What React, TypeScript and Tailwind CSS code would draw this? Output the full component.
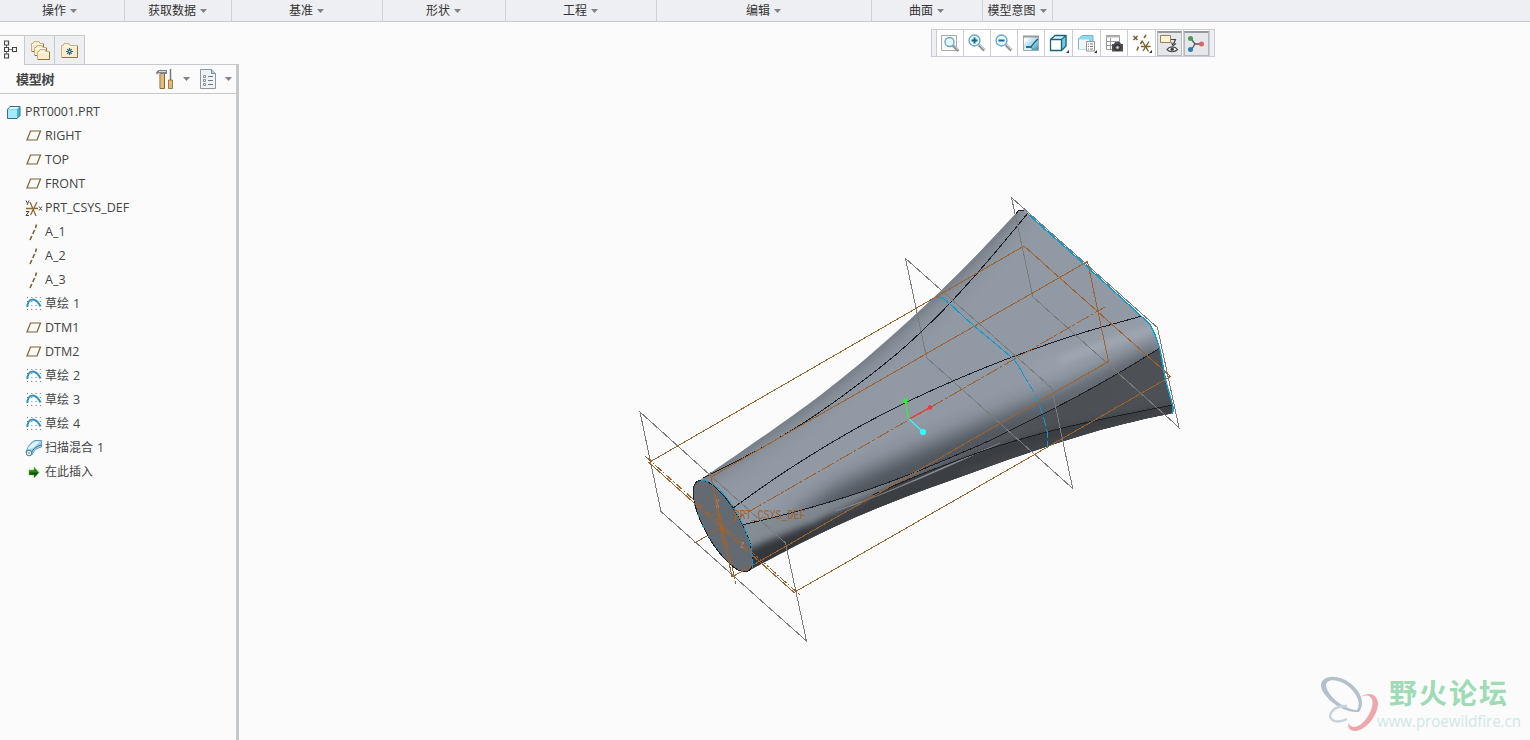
import type { ReactNode } from 'react'

type Point = [number, number]

interface MenuGroup {
  label: string
  width: string
}

type NodeKind = 'plane' | 'csys' | 'axis' | 'sketch' | 'blend' | 'insert'

interface TreeNode {
  kind: NodeKind
  label: string
  suffix?: string
  cjk?: boolean
}

const menuGroups: MenuGroup[] = [
  { label: '操作', width: 'w-[125px] pr-[5px]' },
  { label: '获取数据', width: 'w-[107px] pr-px' },
  { label: '基准', width: 'w-[151px] pr-px' },
  { label: '形状', width: 'w-[123px] pr-px' },
  { label: '工程', width: 'w-[151px] pr-px' },
  { label: '编辑', width: 'w-[215px] pr-px' },
  { label: '曲面', width: 'w-[111px] pr-px' },
  { label: '模型意图', width: 'w-[70px] pr-px' },
]

const treeNodes: TreeNode[] = [
  { kind: 'plane', label: 'RIGHT' },
  { kind: 'plane', label: 'TOP' },
  { kind: 'plane', label: 'FRONT' },
  { kind: 'csys', label: 'PRT_CSYS_DEF' },
  { kind: 'axis', label: 'A_1' },
  { kind: 'axis', label: 'A_2' },
  { kind: 'axis', label: 'A_3' },
  { kind: 'sketch', label: '草绘', suffix: '1', cjk: true },
  { kind: 'plane', label: 'DTM1' },
  { kind: 'plane', label: 'DTM2' },
  { kind: 'sketch', label: '草绘', suffix: '2', cjk: true },
  { kind: 'sketch', label: '草绘', suffix: '3', cjk: true },
  { kind: 'sketch', label: '草绘', suffix: '4', cjk: true },
  { kind: 'blend', label: '扫描混合', suffix: '1', cjk: true },
  { kind: 'insert', label: '在此插入', cjk: true },
]

function Caret() {
  return (
    <svg className="w-[7px] h-1 shrink-0" viewBox="0 0 7 4" aria-hidden="true">
      <path d="M0 0h7L3.5 4z" fill="#808285" />
    </svg>
  )
}

function MenuBar() {
  return (
    <div className="flex h-[22px] shrink-0 border-b border-[#c6cacd] bg-[#eeeff2] text-xs text-[#333]">
      {menuGroups.map((group) => (
        <div
          key={group.label}
          className={`flex items-center justify-center gap-1 border-r border-[#cfd2d6] ${group.width}`}
        >
          <span className="leading-none">{group.label}</span>
          <Caret />
        </div>
      ))}
    </div>
  )
}

function NodeIcon({ kind }: { kind: NodeKind }) {
  return (
    <svg className="w-[18px] h-[18px] shrink-0" viewBox="0 0 18 18" fill="none" aria-hidden="true">
      {kind === 'plane' && <path d="M5.5 4h10L12 13H2z" stroke="#7d612f" strokeWidth="1.2" />}
      {kind === 'csys' && (
        <>
          <path d="M1 9.500h12M5 3l6 14M12 3L5.500 16" stroke="#8a6a35" strokeWidth="1.3" />
          <path d="M1 1.500l1.500 3M4 1.500L2 6M1 12.500h3L1 16.500h3M14 7.500l3 4M17 7.500l-3 4" stroke="#444" />
        </>
      )}
      {kind === 'axis' && (
        <path d="M11.500 1.500L10.500 5M9.500 7L7.800 11M6.800 13L5 17" stroke="#7d612f" strokeWidth="1.6" />
      )}
      {kind === 'sketch' && (
        <>
          <path
            d="M2 2.500h14M2 6.500h14M2 10.500h14M2 14.500h14"
            stroke="#777"
            strokeDasharray="1 3.300"
          />
          <path d="M2.300 12C3 2.500 10.500 2 15.500 11.500" stroke="#2e94c4" strokeWidth="2" />
        </>
      )}
      {kind === 'blend' && (
        <>
          <path d="M1 13C3 7 6 3 10 1.500h6.500V8C12 9 9 11 7 16z" fill="#9fd0ea" stroke="#4e87a4" strokeWidth="0.8" />
          <path d="M2.500 10.500C4 7 7 4 11 2.500h4L8 9z" fill="#e0f4fb" />
          <path d="M6 14c2-4 5-6.500 10-8" stroke="#356f92" strokeWidth="1" />
          <circle cx="4" cy="14" r="2.800" fill="#e7f4fa" stroke="#3d7897" />
          <circle cx="4" cy="14" r="0.700" fill="#444" />
        </>
      )}
      {kind === 'insert' && (
        <>
          <path d="M4 7h5V4l5 5.500-5 5.500v-3H4z" fill="#1d8d12" stroke="#7bb62e" strokeWidth="0.5" />
          <path d="M4.500 9.500h9L9.500 14v-2.500h-5z" fill="#154c12" />
        </>
      )}
    </svg>
  )
}

function FolderShape({ x, y, w, h }: { x: number; y: number; w: number; h: number }) {
  return (
    <g transform={`translate(${x} ${y})`}>
      <path
        d={`M.5 ${h - 0.5}V2.500H2L3 .5h5l1 2h${w - 9.5}v${h - 3}z`}
        fill="#fdeccb"
        stroke="#c4ae82"
      />
      <path d={`M1 3.500h${w - 2}`} stroke="#fffaf0" />
      <path d={`M1 ${h - 0.5}h${w - 1.5}V3`} fill="none" stroke="#957435" />
    </g>
  )
}

function PanelTabs() {
  return (
    <div className="flex h-[29px]">
      <div className="flex w-6 items-center border-t border-[#c5c9ce] pl-1">
        <svg className="w-[13px] h-5" viewBox="0 0 13 20" fill="#fff" stroke="#444" aria-hidden="true">
          <path d="M2.500 5v10M5 9.500h3" stroke="#777" />
          <path d="M.5 1h4v4h-4zM.5 7.500h4v4h-4zM.5 14h4v4h-4zM8.500 7.500h4v4h-4z" strokeWidth="1.200" />
        </svg>
      </div>
      <div className="flex w-[31px] items-center justify-center border border-b-0 border-[#c5c9ce] bg-[#eeeff2] pt-0.5 pl-[3px]">
        <svg className="w-5 h-5" viewBox="0 0 20 20" aria-hidden="true">
          <FolderShape x={0} y={0} w={13} h={11} />
          <FolderShape x={3} y={4} w={13} h={11} />
          <FolderShape x={6} y={8} w={13} h={11} />
        </svg>
      </div>
      <div className="flex w-[30px] items-center justify-center border-t border-r border-[#c5c9ce] bg-[#eeeff2] pt-0.5">
        <svg className="w-[18px] h-4" viewBox="0 0 18 16" aria-hidden="true">
          <FolderShape x={0} y={0} w={17} h={15} />
          <path d="M8.500 5v7M5 8.500h7M6.200 6.200l4.600 4.600M10.800 6.200l-4.600 4.600" stroke="#1c6685" strokeWidth="1.200" />
          <circle cx="8.500" cy="8.500" r="0.800" fill="#fff" />
        </svg>
      </div>
    </div>
  )
}

function PanelHeader() {
  return (
    <div className="flex h-[29px] items-center border-b border-[#c5c9ce] pl-4 pr-1">
      <span className="pt-px text-[13px] font-bold leading-none text-[#444] tracking-[-0.02em]">模型树</span>
      <svg className="ml-auto w-[18px] h-5" viewBox="0 0 18 20" aria-hidden="true">
        <path d="M4.500 5h4v14.500h-4z" fill="#e2bb7b" />
        <path d="M4 5v14.500M8.500 5v14.500H4" fill="none" stroke="#8d6526" />
        <path d="M0 3.500C2 .5 4 .5 6 1h5v4H4.500C3 3.500 2 4 1 6z" fill="#7d838c" />
        <path d="M3 2.500h7" stroke="#d4d8df" />
        <path d="M14.500 0v11" stroke="#717983" strokeWidth="1.500" />
        <path d="M12.500 11h4v8.500h-4z" fill="#e2bb7b" stroke="#8d6526" strokeWidth="0.800" />
      </svg>
      <div className="ml-[9px]">
        <Caret />
      </div>
      <svg className="ml-2.5 w-[17px] h-5" viewBox="0 0 17 20" fill="none" aria-hidden="true">
        <path d="M.5.5h11l4 4v15H.5z" fill="#eef3f6" stroke="#8d989f" />
        <path d="M11.500.5v4h4" fill="#b9cbd8" stroke="#6e8ba0" />
        <path d="M8 7.500h5M8 11.500h5M8 15.500h5" stroke="#777" />
        <path d="M3.500 6.500h2v2h-2zM3.500 10.500h2v2h-2zM3.500 14.500h2v2h-2z" stroke="#777" strokeWidth="0.800" />
      </svg>
      <div className="ml-2">
        <Caret />
      </div>
    </div>
  )
}

function ModelTree() {
  return (
    <ul className="flex flex-col pt-[5px] text-[#444]">
      <li className="flex h-6 items-center gap-1 pt-0.5 pl-[7px]">
        <svg className="w-3.5 h-[13px] shrink-0" viewBox="0 0 14 13" aria-hidden="true">
          <path d="M.5 3.500L3 .5h10v9l-3 3H.5z" fill="#2b86ad" stroke="#2c7190" />
          <path d="M1 3.500L3 1h9.500L10 3.500z" fill="#d9f7fd" />
          <path d="M1 3.500h9v8.500H1z" fill="#a5eafa" />
          <path d="M10 3.500L12.500 1v8L10 12z" fill="#45b4dd" />
        </svg>
        <span className="font-['Open_Sans'] text-[12.5px] tracking-[-0.01em]">PRT0001.PRT</span>
      </li>
      {treeNodes.map((node) => (
        <li
          key={node.label + (node.suffix ?? '')}
          className="flex h-6 items-center gap-0.5 pt-0.5 pl-[25px]"
        >
          <NodeIcon kind={node.kind} />
          {node.cjk ? (
            <span className="text-xs">
              {node.label}
              {node.suffix && (
                <span className="ml-1 font-['Open_Sans'] text-[12.5px]">{node.suffix}</span>
              )}
            </span>
          ) : (
            <span className="font-['Open_Sans'] text-[12.5px]">{node.label}</span>
          )}
        </li>
      ))}
    </ul>
  )
}

function ToolCell({ width, pressed, more, children }: {
  width: string
  pressed?: boolean
  more?: boolean
  children: ReactNode
}) {
  return (
    <div className={`relative flex items-center justify-center border-l border-[#c9ccd4] bg-white ${width}`}>
      <div
        className={
          pressed
            ? 'flex h-[25px] w-[25px] shrink-0 items-center justify-center border border-t-2 border-[#b5b8bd] border-t-[#96999d] bg-[#e6e7eb] pr-px'
            : 'flex'
        }
      >
        <svg className="w-5 h-5 shrink-0" viewBox="0 0 20 20" fill="none" aria-hidden="true">
          {children}
        </svg>
      </div>
      {more && (
        <svg className="absolute right-[3px] bottom-[3px] w-[3px] h-[3px]" viewBox="0 0 3 3" aria-hidden="true">
          <path d="M3 0v3H0z" fill="#333" />
        </svg>
      )}
    </div>
  )
}

function Lens({ cx, cy, r }: { cx: number; cy: number; r: number }) {
  return (
    <>
      <path d={`M${cx + r - 1} ${cy + r - 1}l5.500 5.500`} stroke="#8f9498" strokeWidth="3" />
      <path d={`M${cx + r} ${cy + r - 1}l5 5`} stroke="#d8dbde" strokeWidth="1" />
      <circle cx={cx} cy={cy} r={r} fill="#e6f6fb" stroke="#62a5c4" strokeWidth="1.300" />
    </>
  )
}

function GraphicsToolbar() {
  return (
    <div className="absolute left-[692px] top-[7px] flex h-7 w-[284px] border border-[#c9ccd4] bg-[#eeeff2] pl-1">
      <ToolCell width="w-[27px]">
        <path d="M1.500 2.500h15v15h-15z" fill="#fafafa" stroke="#aaa" />
        <Lens cx={9.5} cy={9} r={4.500} />
      </ToolCell>
      <ToolCell width="w-[27px]">
        <Lens cx={7.5} cy={7.500} r={5.500} />
        <path d="M4.500 7.500h6M7.500 4.500v6" stroke="#14688f" strokeWidth="2" />
      </ToolCell>
      <ToolCell width="w-[27px]">
        <Lens cx={7.5} cy={7.500} r={5.500} />
        <path d="M4.500 7.500h6" stroke="#14688f" strokeWidth="2" />
      </ToolCell>
      <ToolCell width="w-[27px]">
        <defs>
          <linearGradient id="shade" x1="0" y1="0" x2="1" y2="1">
            <stop offset="0.2" stopColor="#f4fbfd" />
            <stop offset="0.65" stopColor="#8fcbe0" />
            <stop offset="1" stopColor="#2f86a8" />
          </linearGradient>
        </defs>
        <path d="M2.500 3.500h15v14h-15z" fill="url(#shade)" stroke="#a3a9ad" />
        <path d="M2 3.500h16" stroke="#999" strokeWidth="2" />
        <path d="M3 14.500h6L11 17H3z" fill="#d9eef5" />
        <path d="M5 14h5l2.500 3" stroke="#3b8fae" />
        <path d="M5 14h5C12 11 14 8.500 17 6" stroke="#155e7d" strokeWidth="1.300" />
      </ToolCell>
      <ToolCell width="w-[28px]" more>
        <path d="M3 7h10v10.500H3z" fill="#fff" />
        <path d="M4 6L7.500 3H16.500l-3.500 3.500z" fill="#dcf5fc" />
        <path d="M13 7l4.500-4v10L13 17z" fill="#72c7e1" />
        <path d="M1.500 6.500L6 2.500h11v10.500l-4.500 4.500h-11zM1.500 6.500h11v11M12.500 6.500l4.500-4" stroke="#14667f" strokeWidth="1.300" />
      </ToolCell>
      <ToolCell width="w-[28px]" more>
        <path d="M1.500 6L5 2.500h11V13L13 16H1.500z" fill="#8fd8ee" stroke="#6bbad6" />
        <path d="M2 6.500h10V16H2z" fill="#f2f6f8" />
        <path d="M9.500 8.500h8v9.500h-8z" fill="#fff" stroke="#909498" />
        <path d="M13 11h3M13 13.500h3M13 16h3M11 11h1M11 13.500h1M11 16h1" stroke="#777" />
      </ToolCell>
      <ToolCell width="w-[27px]">
        <path d="M2.500 2.500h13v14h-13z" fill="#fff" stroke="#999" />
        <path d="M2 3.500h14" stroke="#aeb1b5" strokeWidth="2" />
        <path d="M6.500 5v11M3 8.500h12M3 12.500h12" stroke="#999" />
        <path d="M8 11h2l1-2h5l1 2h2v7.500H8z" fill="#4a4d52" />
        <circle cx="13.500" cy="14.500" r="2.700" fill="#777d84" stroke="#17191c" />
        <circle cx="13.500" cy="14.500" r="1" fill="#dfe2e6" />
      </ToolCell>
      <ToolCell width="w-[28px]" more>
        <path d="M1.500 3l4 4M5.500 3l-4 4M14 2l-2 3M10.500 7.500L8.500 11M6.500 13.500l-1.500 4" stroke="#7d612f" strokeWidth="1.600" />
        <path d="M9 13.500h9.500M10.500 8.500l6 10M17 8.500L11 18" stroke="#7d612f" strokeWidth="1.400" />
      </ToolCell>
      <ToolCell width="w-[28px]" pressed>
        <path d="M1.500 1.500h10v7h-10z" fill="#fff2d4" stroke="#9a815a" />
        <path d="M12 5.500h4.500L14.500 10M12.500 8.500l1.500 3 3-2" stroke="#444" strokeWidth="1.200" />
        <path d="M8 15.500c2.500-3.500 8-3.500 10.500 0-2.500 3-8 3-10.500 0z" fill="#fff" stroke="#444" strokeWidth="1.200" />
        <circle cx="13.200" cy="15.300" r="1.800" fill="#444" />
      </ToolCell>
      <ToolCell width="w-[26px]" pressed>
        <path d="M5 4.500l4 5.500L5.500 15.500M9 10h6" stroke="#555" strokeWidth="1.300" />
        <circle cx="4.500" cy="4.500" r="2.500" fill="#4a9b56" />
        <circle cx="4.500" cy="15.500" r="2.500" fill="#2c7da8" />
        <circle cx="15.500" cy="10" r="2.500" fill="#e0645f" />
      </ToolCell>
      <div className="w-[5px] border-l border-[#c9ccd4]" />
    </div>
  )
}

// Catmull-Rom through the points, written as cubic segments
function smooth(points: Point[], join = 'M'): string {
  let d = `${join}${points[0][0]} ${points[0][1]}`
  for (let i = 0; i < points.length - 1; i++) {
    const p0 = points[Math.max(i - 1, 0)]
    const p1 = points[i]
    const p2 = points[i + 1]
    const p3 = points[Math.min(i + 2, points.length - 1)]
    d += `C${p1[0] + (p2[0] - p0[0]) / 6} ${p1[1] + (p2[1] - p0[1]) / 6} `
    d += `${p2[0] - (p3[0] - p1[0]) / 6} ${p2[1] - (p3[1] - p1[1]) / 6} ${p2[0]} ${p2[1]}`
  }
  return d
}

const topOutline: Point[] = [
  [700, 480], [740, 452.5], [780, 424.5], [820, 395.5], [860, 363.5], [900, 328.5], [940, 291.5], [980, 251.5], [1018, 211],
]
const endOutline: Point[] = [
  [1018, 211], [1023, 210], [1029, 214], [1085, 264], [1142, 316], [1152, 327], [1160, 348], [1166, 379], [1173, 405], [1173, 413],
]
const bottomOutline: Point[] = [
  [1173, 413], [1140, 420], [1095, 431.5], [1047, 446.5], [1000, 462.5], [953, 479.5], [905, 497], [857, 516.5], [807, 540], [748, 571],
]
const edgeUpper: Point[] = [
  [703, 478], [735, 462], [767, 445], [808, 420], [850, 390.5], [893, 357], [922, 331], [952, 301], [990, 258.5], [1028, 213],
]
const edgeMiddle: Point[] = [
  [733, 508], [777, 477], [821, 449], [865, 423.5], [910, 400.5], [960, 378], [1015, 356], [1077, 334.5], [1142, 316],
]
const edgeLower: Point[] = [
  [742, 525], [785, 514.5], [828, 502.5], [870, 489], [912, 473.5], [953, 456.5], [993, 439], [1035, 418], [1075, 397.5], [1117, 374], [1160, 348],
]
const edgeBottom: Point[] = [
  [873, 495], [912, 478], [953, 462], [995, 447], [1047, 432], [1105, 418.5], [1173, 405],
]
const midSection: Point[] = [
  [934, 297], [942, 298], [950, 304], [973, 325], [1012, 358], [1023, 374], [1033, 391], [1040, 407], [1047, 431], [1047, 447],
]

const bodyPath = smooth(topOutline) + smooth(endOutline, 'L') + smooth(bottomOutline, 'L') + 'L715 530Z'
const underPath = smooth(edgeLower) + 'L1175 348V590H742Z'

function Viewport() {
  return (
    <svg className="block h-[718px] w-[1291px]" viewBox="239 22 1291 718" fill="none">
      <defs>
        <clipPath id="body">
          <path d={bodyPath} />
        </clipPath>
        <clipPath id="under">
          <path d={underPath} />
        </clipPath>
        <filter id="soft" x="-20%" y="-20%" width="140%" height="140%" colorInterpolationFilters="sRGB">
          <feGaussianBlur stdDeviation="10" />
        </filter>
        <filter id="fine" x="-20%" y="-20%" width="140%" height="140%" colorInterpolationFilters="sRGB">
          <feGaussianBlur stdDeviation="3.500" />
        </filter>
        <linearGradient id="underFill" gradientUnits="userSpaceOnUse" x1="742" y1="0" x2="1170" y2="0">
          <stop offset="0" stopColor="#858d95" />
          <stop offset="0.3" stopColor="#7a8189" />
          <stop offset="0.45" stopColor="#666c73" />
          <stop offset="0.6" stopColor="#54585d" />
          <stop offset="0.75" stopColor="#4c5054" />
          <stop offset="1" stopColor="#4d5155" />
        </linearGradient>
      </defs>

      {/* solid body */}
      <g clipPath="url(#body)">
        <path d={bodyPath} fill="#9199a4" />
        <path d={smooth(topOutline)} stroke="#646b73" strokeWidth="12" opacity="0.65" filter="url(#soft)" />
        <path d={smooth(topOutline)} stroke="#69717a" strokeWidth="5" opacity="0.75" filter="url(#fine)" />
        <path
          d="M790 520L835 488 880 467 940 441 1000 416 1070 388 1165 343V365L1080 403 1000 450 870 506 790 528Z"
          fill="#434950"
          opacity="0.9"
          filter="url(#soft)"
        />
        <path d="M1030 372L1150 327" stroke="#a7afb9" strokeWidth="9" opacity="0.8" filter="url(#soft)" />
        <path d="M1060 360L1156 328" stroke="#a7afb9" strokeWidth="6" opacity="0.8" filter="url(#fine)" />
        <g clipPath="url(#under)">
          <path d="M700 330H1180V590H700z" fill="url(#underFill)" />
          <path
            d="M730 557L770 540 805 526 833 519 870 506 905 492V540L740 610Z"
            fill="#33363b"
            filter="url(#fine)"
          />
          <path d="M822 519C845 509 868 497 905 482L953 462 995 447 1047 432 1105 418.500 1175 405V440L900 520 790 555Z" fill="#3b3e42" filter="url(#fine)" />
          <path d="M873 495L912 478 953 462 995 447 1047 432 1105 418.500 1175 405V440L900 520 850 530Z" fill="#3b3e42" />
          <path d="M835 511C870 501 910 481 1000 443C940 470 900 489 835 511Z" fill="#8d959e" stroke="#8d959e" strokeWidth="0.400" />
          <path d="M960 474L1040 446 1100 430 1165 413" stroke="#4b4e53" strokeWidth="3" filter="url(#fine)" />
        </g>
      </g>

      {/* round end cap */}
      <ellipse cx="723" cy="526" rx="51.600" ry="17.900" transform="rotate(60.600 723 526)" fill="#636a72" />

      <g shapeRendering="crispEdges">
        <g stroke="#1d1f25">
          <path d={smooth(edgeUpper)} />
          <path d={smooth(edgeMiddle)} />
          <path d={smooth(edgeLower)} />
          <path d={smooth(edgeBottom)} />
          <path d="M1016 214L1019 210H1024" />
          <ellipse cx="723" cy="526" rx="51.600" ry="17.900" transform="rotate(60.600 723 526)" />
        </g>

        <g stroke="#7b7b7b">
          <path d="M640 412L785.500 543 806.500 641 661 511.500Z" />
          <path d="M905.500 258.500L1051.700 388 1072.700 488.500 926.500 357.500Z" />
          <path d="M1011.500 197.500L1157.500 327.700 1179 427.500 1033 297Z" />
        </g>

        <g stroke="#a0622d">
          <path d="M649 462.500L1024 246 1170.500 376.500 794 592.500Z" />
          <path d="M711 477L1087.500 261.500 1108.500 361.500 732 577Z" />
          <path d="M694.500 543L1105 307" strokeDasharray="14 2 3 2" />
          <path d="M645 456L801 596" strokeDasharray="8 2 2 2" />
          <path d="M710 472L736 584" strokeDasharray="8 2 2 2" />
          <path d="M714 494L724 546" />
        </g>
        <path d="M716 499l3 9M719 499l-3 9M741 542h3l-3 5h3" stroke="#a77a58" />

        <g stroke="#0b9bd0">
          <path d="M701 480C716 480 733 504 743 525 751 543 754 558 752 568" strokeDasharray="9 2" />
          <path d="M694 503C698 519 707 536 718 549" strokeDasharray="3 9" />
          <path d={smooth(midSection.slice(0, 6))} />
          <path d={smooth(midSection.slice(5))} strokeDasharray="9 3" />
          <path d={smooth(endOutline.slice(2))} strokeWidth="1.300" transform="translate(-0.500 0.500)" />
        </g>
      </g>

      <text
        x="733.500"
        y="519"
        fill="#a0622d"
        className="font-['Liberation_Mono'] text-xs"
        textLength="72"
        lengthAdjust="spacingAndGlyphs"
      >
        PRT_CSYS_DEF
      </text>

      {/* spin center */}
      <path d="M908.500 419L905.500 402" stroke="#33f03a" strokeWidth="1.300" />
      <path d="M909 419L930 407.500" stroke="#fb3237" strokeWidth="1.300" />
      <path d="M909 419L922 431" stroke="#36f8fa" strokeWidth="1.300" />
      <circle cx="905.300" cy="401" r="2.400" fill="#2bf52f" />
      <circle cx="930" cy="407.500" r="2.200" fill="#fb3237" />
      <circle cx="923" cy="432" r="3.100" fill="#36f8fa" />

      {/* forum mark */}
      <g>
        <path
          fillRule="evenodd"
          d="M1321 685C1322 675 1338 674 1350 683 1362 692 1365 704 1359 712 1348 713 1334 706 1326 696 1322 691 1321 688 1321 685ZM1326 685C1326 693 1341 709 1357 710 1363 701 1353 688 1343 683 1335 679 1327 679 1326 685Z"
          fill="#b3c0cd"
        />
        <path
          d="M1347 706C1337 705 1330 711 1330 717 1333 723 1341 722 1347 719"
          stroke="#c9d3dc"
          strokeWidth="2.500"
        />
        <path
          d="M1360 697C1368 692 1377 693 1378 703 1378 716 1365 731 1355 731 1350 731 1348 728 1348 723 1352 730 1360 727 1366 719 1373 710 1375 699 1369 696 1366 695 1363 696 1360 697Z"
          fill="#efa7ab"
        />
        <text
          x="1389"
          y="704"
          fill="#9edbb6"
          className="font-['Noto_Sans_CJK_SC'] text-[28px] font-bold"
          textLength="118"
        >
          野火论坛
        </text>
        <text
          x="1377"
          y="727"
          fill="#cde9e6"
          className="font-['Open_Sans'] text-base"
          textLength="144"
          lengthAdjust="spacingAndGlyphs"
        >
          www.proewildfire.cn
        </text>
      </g>
    </svg>
  )
}

export default function App() {
  return (
    <div className="flex h-[740px] w-[1530px] flex-col overflow-hidden bg-[#fbfbfb] font-['Liberation_Sans','Noto_Sans_CJK_SC',sans-serif]">
      <MenuBar />
      <div className="flex min-h-0 flex-1">
        <aside className="flex w-[239px] shrink-0 flex-col pt-[13px]">
          <PanelTabs />
          <div className="flex flex-1">
            <div className="flex-1">
              <div className="ml-6 h-px bg-[#c5c9ce]" />
              <PanelHeader />
              <ModelTree />
            </div>
            <div className="w-[3px] bg-[#c5c9ce]" />
          </div>
        </aside>
        <main className="relative">
          <Viewport />
          <GraphicsToolbar />
        </main>
      </div>
    </div>
  )
}
